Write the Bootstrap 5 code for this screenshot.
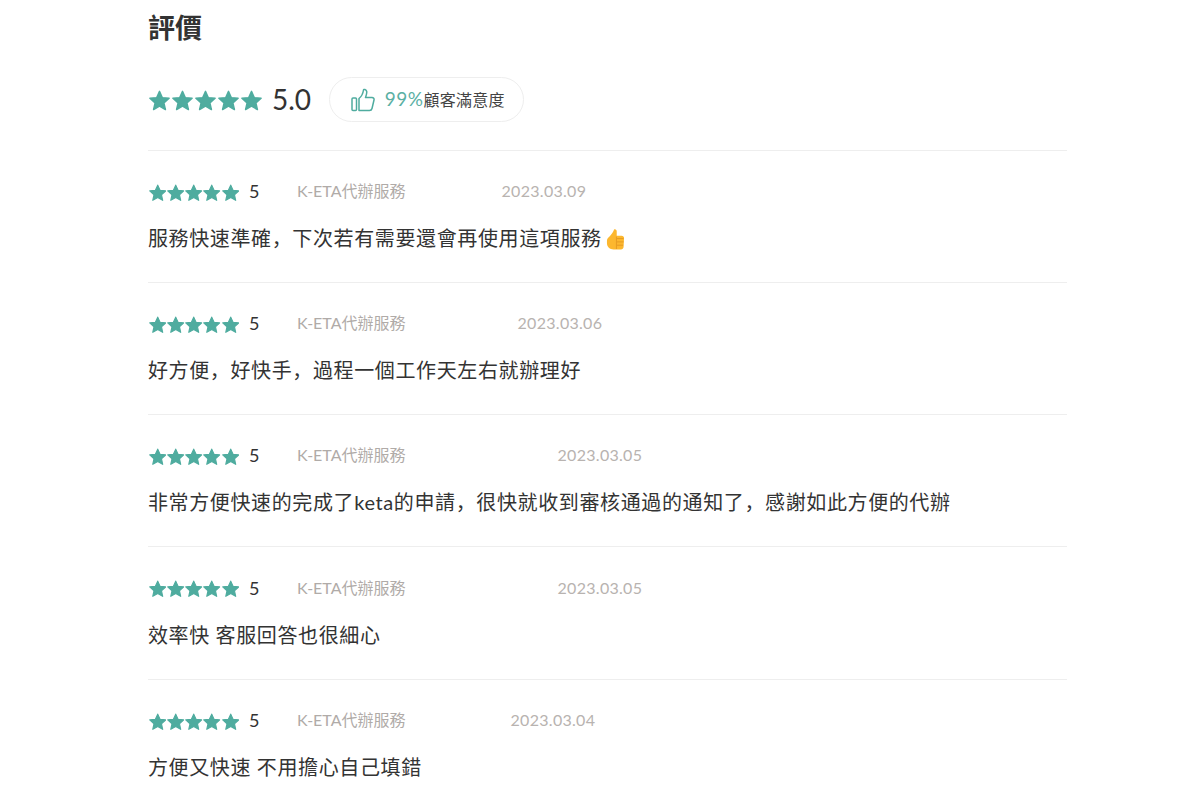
<!DOCTYPE html>
<html lang="zh-CN">
<head>
<meta charset="utf-8">
<title>評價</title>
<link href="https://cdn.jsdelivr.net/npm/bootstrap@5.3.0/dist/css/bootstrap.min.css" rel="stylesheet">
<style>
html,body{height:800px;overflow:hidden;background:#fff}
body{font-family:"Lato","Noto Sans CJK SC",sans-serif;color:#333}
.rev-wrap{width:919px;margin-left:148px}
.rev-title{font-size:27px;font-weight:700;line-height:40px;margin:8px 0 0;color:#333;height:40px}
.rev-summary{padding-top:29px;border-bottom:1px solid #eee;box-sizing:content-box;height:72.6px}
.rev-stars-lg{gap:2px;margin-left:1px;height:44px;padding-top:2px}
.rev-score{font-size:28px;line-height:44px;margin-left:10px;color:#333;letter-spacing:-.1px}
.rev-pill{height:45px;width:195px;margin-left:18px;border:1px solid #eee;border-radius:23px;padding-left:21px}
.rev-pct{color:#5bb0a4;font-size:19px;margin-left:10px;letter-spacing:.5px}
.rev-sat{color:#444;font-size:16px;letter-spacing:.2px}
.rev-item{height:132.25px;border-bottom:1px solid #eee;padding-top:27.4px}
.rev-item:last-child{border-bottom:0}
.rev-meta{height:26px;line-height:26px}
.rev-stars{gap:.7px;margin-left:1px;width:90px;padding-top:3px}
.rev-n{font-size:18px;margin-left:10px;width:48px;color:#333}
.rev-svc{font-size:16px;color:#b0aba8}
.rev-date{font-size:16px;color:#b8b3b0;letter-spacing:.3px}
.rev-text{font-size:20px;line-height:30px;margin:19px 0 0;color:#333;letter-spacing:.62px}
.rev-emoji{vertical-align:-4px;margin-left:-1px}
</style>
</head>
<body>
<svg width="0" height="0" class="d-block position-absolute">
  <symbol id="star" viewBox="0 0 24 24"><path fill="#4fac9f" stroke="#4fac9f" stroke-width="1.6" stroke-linejoin="round" d="M12 1.500l3.200 7.200 7.800.800-5.900 5.200 1.700 7.700L12 18.400l-6.800 4 1.700-7.700L1 9.500l7.800-.8z"/></symbol>
</svg>
<div class="rev-wrap">
  <h2 class="rev-title">評價</h2>
  <div class="rev-summary d-flex align-items-start">
    <div class="d-flex rev-stars-lg align-items-center">
      <svg width="21" height="21"><use href="#star"/></svg><svg width="21" height="21"><use href="#star"/></svg><svg width="21" height="21"><use href="#star"/></svg><svg width="21" height="21"><use href="#star"/></svg><svg width="21" height="21"><use href="#star"/></svg>
    </div>
    <span class="rev-score">5.0</span>
    <div class="rev-pill d-flex align-items-center">
      <svg width="24" height="24" viewBox="0 0 24 24" fill="none" stroke="#4fac9f" stroke-width="1.500" stroke-linejoin="round"><rect x="1" y="10" width="4.500" height="12.500" rx="1"/><path d="M8 22.500V10.500c2.500-2 4-5 4.500-8.500 0-1 2.800-.8 3.200 1.500.3 2-.7 4.500-1.200 6H21c1.500 0 2.300 1.300 2 2.500l-2 8.500c-.3 1.300-1.200 2-2.500 2z"/></svg>
      <span class="rev-pct">99%</span><span class="rev-sat">顧客滿意度</span>
    </div>
  </div>

  <div class="rev-item">
    <div class="rev-meta d-flex align-items-center">
      <div class="rev-stars d-flex"><svg width="17.500" height="17.500"><use href="#star"/></svg><svg width="17.500" height="17.500"><use href="#star"/></svg><svg width="17.500" height="17.500"><use href="#star"/></svg><svg width="17.500" height="17.500"><use href="#star"/></svg><svg width="17.500" height="17.500"><use href="#star"/></svg></div>
      <span class="rev-n">5</span><span class="rev-svc">K-ETA代辦服務</span><span class="rev-date" style="margin-left:96px">2023.03.09</span>
    </div>
    <p class="rev-text">服務快速準確，下次若有需要還會再使用這項服務 <svg class="rev-emoji" width="19" height="21" viewBox="0 0 20 22"><path fill="#fcb72f" d="M8.500.500c1.600-.6 2.800.5 2.800 2.200v4.300H16.500c1.500 0 2.500 1 2.500 2.300l-.5 9.700c-.2 1.500-1.200 2.500-2.700 2.500H8c-4 0-7-2.500-7-6.500V12c0-1.800 1.200-2.800 3.200-4.800C6.500 5 7.500 3 8.500.500z"/><path stroke="#e59a22" stroke-width="1" fill="none" d="M11.500 10h7M11.500 13.500h7M11.500 17h6.500M11 8v13"/></svg></p>
  </div>

  <div class="rev-item">
    <div class="rev-meta d-flex align-items-center">
      <div class="rev-stars d-flex"><svg width="17.500" height="17.500"><use href="#star"/></svg><svg width="17.500" height="17.500"><use href="#star"/></svg><svg width="17.500" height="17.500"><use href="#star"/></svg><svg width="17.500" height="17.500"><use href="#star"/></svg><svg width="17.500" height="17.500"><use href="#star"/></svg></div>
      <span class="rev-n">5</span><span class="rev-svc">K-ETA代辦服務</span><span class="rev-date" style="margin-left:112px">2023.03.06</span>
    </div>
    <p class="rev-text">好方便，好快手，過程一個工作天左右就辦理好</p>
  </div>

  <div class="rev-item">
    <div class="rev-meta d-flex align-items-center">
      <div class="rev-stars d-flex"><svg width="17.500" height="17.500"><use href="#star"/></svg><svg width="17.500" height="17.500"><use href="#star"/></svg><svg width="17.500" height="17.500"><use href="#star"/></svg><svg width="17.500" height="17.500"><use href="#star"/></svg><svg width="17.500" height="17.500"><use href="#star"/></svg></div>
      <span class="rev-n">5</span><span class="rev-svc">K-ETA代辦服務</span><span class="rev-date" style="margin-left:152px">2023.03.05</span>
    </div>
    <p class="rev-text">非常方便快速的完成了keta的申請，很快就收到審核通過的通知了，感謝如此方便的代辦</p>
  </div>

  <div class="rev-item">
    <div class="rev-meta d-flex align-items-center">
      <div class="rev-stars d-flex"><svg width="17.500" height="17.500"><use href="#star"/></svg><svg width="17.500" height="17.500"><use href="#star"/></svg><svg width="17.500" height="17.500"><use href="#star"/></svg><svg width="17.500" height="17.500"><use href="#star"/></svg><svg width="17.500" height="17.500"><use href="#star"/></svg></div>
      <span class="rev-n">5</span><span class="rev-svc">K-ETA代辦服務</span><span class="rev-date" style="margin-left:152px">2023.03.05</span>
    </div>
    <p class="rev-text">效率快 客服回答也很細心</p>
  </div>

  <div class="rev-item">
    <div class="rev-meta d-flex align-items-center">
      <div class="rev-stars d-flex"><svg width="17.500" height="17.500"><use href="#star"/></svg><svg width="17.500" height="17.500"><use href="#star"/></svg><svg width="17.500" height="17.500"><use href="#star"/></svg><svg width="17.500" height="17.500"><use href="#star"/></svg><svg width="17.500" height="17.500"><use href="#star"/></svg></div>
      <span class="rev-n">5</span><span class="rev-svc">K-ETA代辦服務</span><span class="rev-date" style="margin-left:105px">2023.03.04</span>
    </div>
    <p class="rev-text">方便又快速 不用擔心自己填錯</p>
  </div>
</div>
</body>
</html>
